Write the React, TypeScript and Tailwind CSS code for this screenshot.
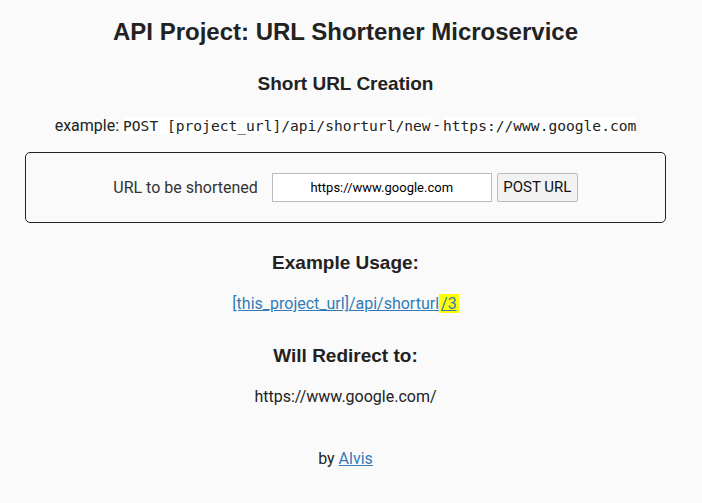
import React from 'react';

const App: React.FC = () => {
  return (
    <div className="min-h-screen bg-[#fafafa] text-[#222] font-['Roboto',sans-serif] text-[16px] text-center">
      <div className="pl-[25px] pr-[36px] pt-[18px] pb-4">
        {/* Header */}
        <h1 className="font-['Liberation_Sans',Arial,sans-serif] font-bold text-[24px] leading-[28px]">
          API Project: URL Shortener Microservice
        </h1>

        <h3 className="mt-[27px] font-['Liberation_Sans',Arial,sans-serif] font-bold text-[19px] leading-[22px]">
          Short URL Creation
        </h3>

        <p className="mt-[21px] text-[16px] leading-[20px]">
          example:{' '}
          <code className="bg-white font-['DejaVu_Sans_Mono',monospace] text-[14.6px]">POST [project_url]/api/shorturl/new</code>
          <span className="inline-block mx-[4px]">-</span>
          <code className="bg-white font-['DejaVu_Sans_Mono',monospace] text-[14.6px]">https://www.google.com</code>
        </p>

        {/* Form */}
        <form
          className="mt-[16px] h-[71px] border border-[#222] rounded-[5px] flex items-center justify-center"
          onSubmit={(e) => e.preventDefault()}
        >
          <label className="text-[16px] text-[#333] mr-[14px]">URL to be shortened</label>
          <input
            type="text"
            defaultValue="https://www.google.com"
            className="w-[220px] h-[29px] bg-white border border-[#bbb] text-center text-[13px] text-black outline-none"
          />
          <button
            type="submit"
            className="ml-[5px] w-[81px] h-[29px] bg-[#f2f2f2] border border-[#bbb] rounded-[2px] text-[15px] text-[#111]"
          >
            POST URL
          </button>
        </form>

        {/* Example usage */}
        <h3 className="mt-[29px] font-['Liberation_Sans',Arial,sans-serif] font-bold text-[19px] leading-[22px]">
          Example Usage:
        </h3>
        <p className="mt-[20px] text-[16px] leading-[20px]">
          <a href="#" className="text-[#337ab7] underline">
            [this_project_url]/api/shorturl<mark className="bg-[#ffff00] text-[#337ab7] px-[2px]">/3</mark>
          </a>
        </p>

        <h3 className="mt-[31px] font-['Liberation_Sans',Arial,sans-serif] font-bold text-[19px] leading-[22px]">
          Will Redirect to:
        </h3>
        <p className="mt-[20px] text-[16px] leading-[20px]">https://www.google.com/</p>

        {/* Footer */}
        <p className="mt-[42px] text-[16px] leading-[20px]">
          by{' '}
          <a href="#" className="text-[#337ab7] underline">
            Alvis
          </a>
        </p>
      </div>
    </div>
  );
};

export default App;
